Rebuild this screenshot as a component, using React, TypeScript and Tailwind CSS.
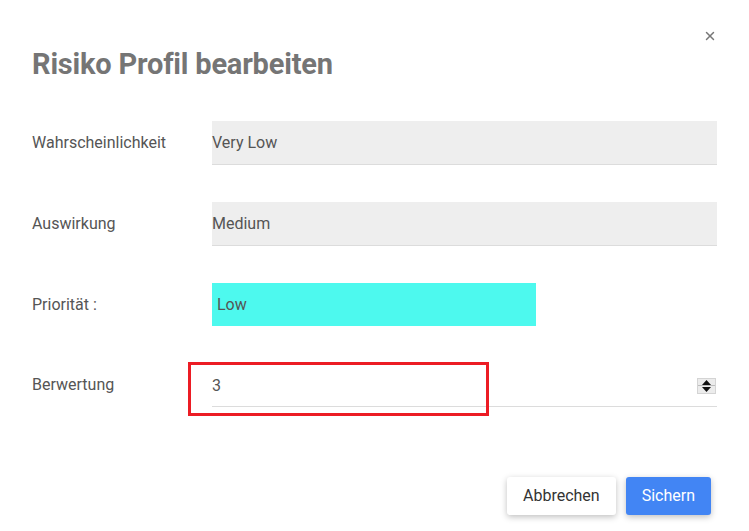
import { X } from "lucide-react";

interface Row {
  label: string;
  value: string;
  kind: "select" | "priority" | "number";
}

const rows: Row[] = [
  { label: "Wahrscheinlichkeit", value: "Very Low", kind: "select" },
  { label: "Auswirkung", value: "Medium", kind: "select" },
  { label: "Priorität :", value: "Low", kind: "priority" },
  { label: "Berwertung", value: "3", kind: "number" },
];

function Spinner() {
  return (
    <div className="flex h-[16px] w-[19px] flex-col items-center justify-between border border-[#d4d4d4] bg-[#ececec]">
      <svg width="9" height="5" viewBox="0 0 9 5" className="mt-[1px]">
        <path d="M4.5 0 L9 5 L0 5 Z" fill="#111" />
      </svg>
      <div className="h-px w-full bg-[#bdbdbd]" />
      <svg width="9" height="5" viewBox="0 0 9 5" className="mb-[1px]">
        <path d="M0 0 L9 0 L4.5 5 Z" fill="#111" />
      </svg>
    </div>
  );
}

function Field({ row }: { row: Row }) {
  if (row.kind === "priority") {
    return (
      <div className="flex h-[43px] w-[324px] items-center bg-[#4df9ee] pl-[5px] text-[16px] text-[#555]">
        {row.value}
      </div>
    );
  }
  if (row.kind === "number") {
    return (
      <div className="relative flex h-[44px] flex-1 items-center border-b border-[#dcdcdc] pt-[2px] text-[16px] text-[#555]">
        <span>{row.value}</span>
        <div className="ml-auto mr-[1px]">
          <Spinner />
        </div>
        {/* red highlight box */}
        <div className="pointer-events-none absolute left-[-24px] top-[-1px] h-[54px] w-[301px] border-[3px] border-[#ec1c24]" />
      </div>
    );
  }
  return (
    <div className="flex h-[44px] flex-1 items-center border-b border-[#dcdcdc] bg-[#eeeeee] text-[16px] text-[#555]">
      {row.value}
    </div>
  );
}

export default function App() {
  return (
    <div
      className="relative h-[531px] w-[749px] bg-white"
      style={{ fontFamily: "Roboto, 'Liberation Sans', sans-serif" }}
    >
      <button className="absolute right-[32px] top-[29px] text-[#777]">
        <X size={14} strokeWidth={2.5} />
      </button>

      <div className="px-[32px] pt-[44px]">
        <h1 className="text-[29px] font-bold leading-[40px] tracking-[-0.2px] text-[#757575]">
          Risiko Profil bearbeiten
        </h1>

        <div className="mt-[37px] flex flex-col gap-[37px]">
          {rows.map((row) => (
            <div key={row.label} className="flex items-center">
              <div className="w-[180px] text-[16px] text-[#555]">{row.label}</div>
              <Field row={row} />
            </div>
          ))}
        </div>

        <div className="mt-[70px] flex justify-end gap-[10px] pr-[6px]">
          <button className="h-[38px] rounded-[3px] bg-white px-[16px] text-[16px] text-[#333] shadow-[0_2px_6px_rgba(0,0,0,0.25)]">
            Abbrechen
          </button>
          <button className="h-[38px] rounded-[3px] bg-[#4285f4] px-[16px] text-[16px] text-white shadow-[0_2px_6px_rgba(0,0,0,0.25)]">
            Sichern
          </button>
        </div>
      </div>
    </div>
  );
}
